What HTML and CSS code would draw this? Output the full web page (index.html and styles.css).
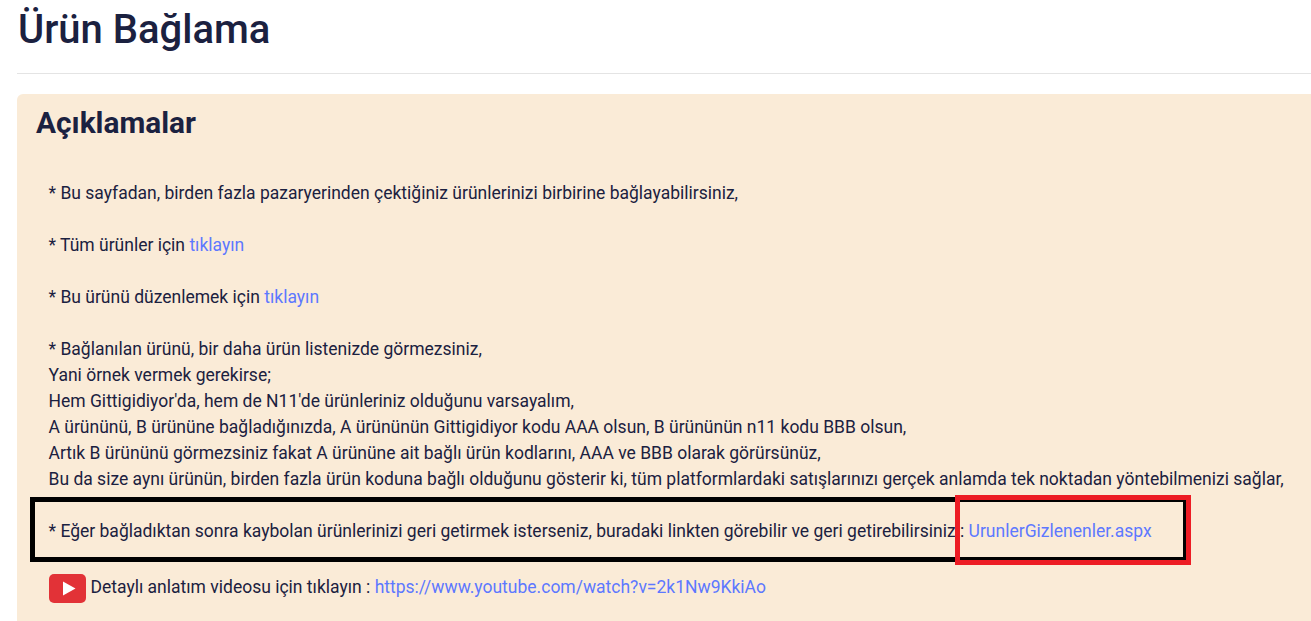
FILE: index.html
```html
<!DOCTYPE html>
<html lang="tr">

<head>
    <meta charset="UTF-8">
    <meta name="viewport" content="width=device-width, initial-scale=1.0">
    <title>Ürün Bağlama</title>
    <link rel="stylesheet" href="styles.css">
</head>

<body>
    <div class="page">
        <h1 class="pageTitle">Ürün Bağlama</h1>
        <hr class="divider">
        <div class="notice">
            <h2 class="noticeTitle">Açıklamalar</h2>
            <div class="noticeBody">
                <p class="line">* Bu sayfadan, birden fazla pazaryerinden çektiğiniz ürünlerinizi birbirine bağlayabilirsiniz,</p>
                <p class="line">* Tüm ürünler için <a href="#">tıklayın</a></p>
                <p class="line">* Bu ürünü düzenlemek için <a href="#">tıklayın</a></p>
                <p class="line">
                    * Bağlanılan ürünü, bir daha ürün listenizde görmezsiniz,<br>
                    Yani örnek vermek gerekirse;<br>
                    Hem Gittigidiyor'da, hem de N11'de ürünleriniz olduğunu varsayalım,<br>
                    A ürününü, B ürününe bağladığınızda, A ürününün Gittigidiyor kodu AAA olsun, B ürününün n11 kodu BBB olsun,<br>
                    Artık B ürününü görmezsiniz fakat A ürününe ait bağlı ürün kodlarını, AAA ve BBB olarak görürsünüz,<br>
                    Bu da size aynı ürünün, birden fazla ürün koduna bağlı olduğunu gösterir ki, tüm platformlardaki satışlarınızı gerçek anlamda tek noktadan yöntebilmenizi sağlar,
                </p>
                <div class="blackBox">
                    * Eğer bağladıktan sonra kaybolan ürünlerinizi geri getirmek isterseniz, buradaki linkten görebilir ve geri getirebilirsiniz : <a href="#">UrunlerGizlenenler.aspx</a>
                    <span class="redBox"></span>
                </div>
                <div class="videoRow">
                    <svg class="ytIcon" viewBox="0 0 37 29" width="37" height="29">
                        <rect width="37" height="29" rx="5" fill="#e23237"></rect>
                        <path d="M14 7.5 L26.5 14.5 L14 21.5 Z" fill="#fff"></path>
                    </svg>
                    <span>Detaylı anlatım videosu için tıklayın : <a href="#">https://www.youtube.com/watch?v=2k1Nw9KkiAo</a></span>
                </div>
            </div>
        </div>
    </div>
</body>

</html>
```

FILE: styles.css
```css
html,
body {
    margin: 0;
    height: 100%;
    overflow: hidden;
}

body {
    font-family: Roboto, "Liberation Sans", sans-serif;
    font-size: 17.5px;
    line-height: 26px;
    color: #1b2140;
    background-color: #fff;
}

a {
    color: #5d78ff;
    text-decoration: none;
}

.page {
    width: 1400px;
    height: 621px;
    padding-left: 17px;
    overflow: hidden;
}

.pageTitle {
    margin: 0;
    padding: 5px 0 0 1px;
    font-size: 40px;
    font-weight: 500;
    line-height: 50px;
}

.divider {
    height: 1px;
    margin: 18px 0 20px;
    border: 0;
    background-color: #e4e4e4;
}

.notice {
    height: 560px;
    padding: 9px 0 0 19px;
    border-radius: 6px 0 0 0;
    background-color: #faebd7;
}

.noticeTitle {
    margin: 0 0 37px;
    font-size: 29.8px;
    font-weight: 700;
    line-height: 40px;
}

.noticeBody {
    padding-left: 12.5px;
}

.line {
    margin: 0 0 26px;
}

.blackBox {
    position: relative;
    display: inline-block;
    margin: -21px 0 0 -18.5px;
    padding: 16px 31.5px 13px 13.5px;
    border: 5px solid #000;
    white-space: nowrap;
}

/* kirmizi cerceve siyah kutunun ustunde duruyor */
.redBox {
    position: absolute;
    top: -7px;
    right: -8px;
    width: 226px;
    height: 60px;
    border: 5px solid #ed1c24;
}

.videoRow {
    display: flex;
    align-items: flex-start;
    gap: 5px;
    margin-top: 12px;
}

.ytIcon {
    flex-shrink: 0;
}
```
